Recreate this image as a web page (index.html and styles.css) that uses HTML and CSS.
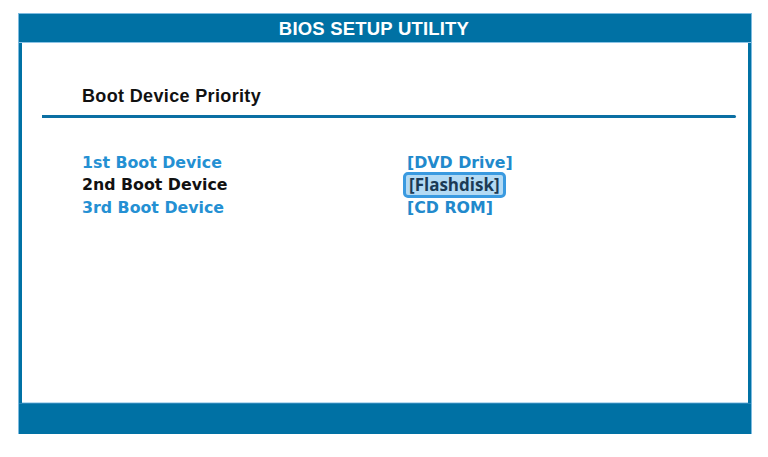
FILE: index.html
```html
<!DOCTYPE html>
<html>
<head>
<meta charset="utf-8">
<link rel="stylesheet" href="styles.css">
</head>
<body>
<div class="frame">
  <div class="header">BIOS SETUP UTILITY</div>
  <div class="content">
    <div class="title">Boot Device Priority</div>
    <div class="rule"></div>
    <div class="list">
      <div class="label">1st Boot Device</div>
      <div class="value">[DVD Drive]</div>
      <div class="label active">2nd Boot Device</div>
      <div class="value"><span class="selected">[Flashdisk]</span></div>
      <div class="label">3rd Boot Device</div>
      <div class="value">[CD ROM]</div>
    </div>
  </div>
  <div class="footer"></div>
</div>
</body>
</html>
```
FILE: styles.css
```css
html, body {
  margin: 0;
  padding: 0;
  background: #ffffff;
}
.frame {
  box-sizing: border-box;
  margin: 14px 0 0 19px;
  width: 732px;
  height: 420px;
  background: #0071a4;
  box-shadow: 0 0 0 1px #7dbbe0;
  display: flex;
  flex-direction: column;
}
.header {
  height: 29px;
  line-height: 30px;
  padding-right: 22px;
  text-align: center;
  color: #ffffff;
  font-family: "Liberation Sans", Arial, sans-serif;
  font-weight: bold;
  font-size: 18.5px;
  letter-spacing: 0.2px;
  border-bottom: 1px solid #8cc4e6;
  box-sizing: border-box;
}
.content {
  flex: 1;
  background: #ffffff;
  margin: 0 3px;
  padding-top: 43px;
  box-shadow: inset 0 -1px 0 #b9dcf0;
}
.title {
  padding-left: 60px;
  font-family: "Liberation Sans", Arial, sans-serif;
  font-weight: bold;
  font-size: 18px;
  letter-spacing: 0.35px;
  line-height: 20px;
  color: #111111;
}
.rule {
  height: 3px;
  background: #0b6fa3;
  margin: 9px 12px 0 20px;
  border-radius: 0 2px 2px 0;
}
.list {
  display: grid;
  grid-template-columns: 325px auto;
  padding: 34px 0 0 60px;
  font-family: "DejaVu Sans", Verdana, sans-serif;
  font-weight: bold;
  font-size: 15.8px;
  line-height: 22px;
}
.label {
  color: #2490d3;
}
.label.active {
  color: #111111;
}
.value {
  color: #2189cc;
}
.selected {
  display: inline-block;
  margin: -2px 0 -1px -4px;
  padding: 0 3px 0 3px;
  line-height: 20px;
  border: 3px solid #3a9ae0;
  border-radius: 5px;
  background: #b3daf4;
  color: #1b3a56;
  font-family: "Open Sans", sans-serif;
  font-weight: bold;
  font-size: 17px;
}
.footer {
  height: 31px;
  border-top: 1px solid #2a86b8;
  box-sizing: border-box;
}
```
